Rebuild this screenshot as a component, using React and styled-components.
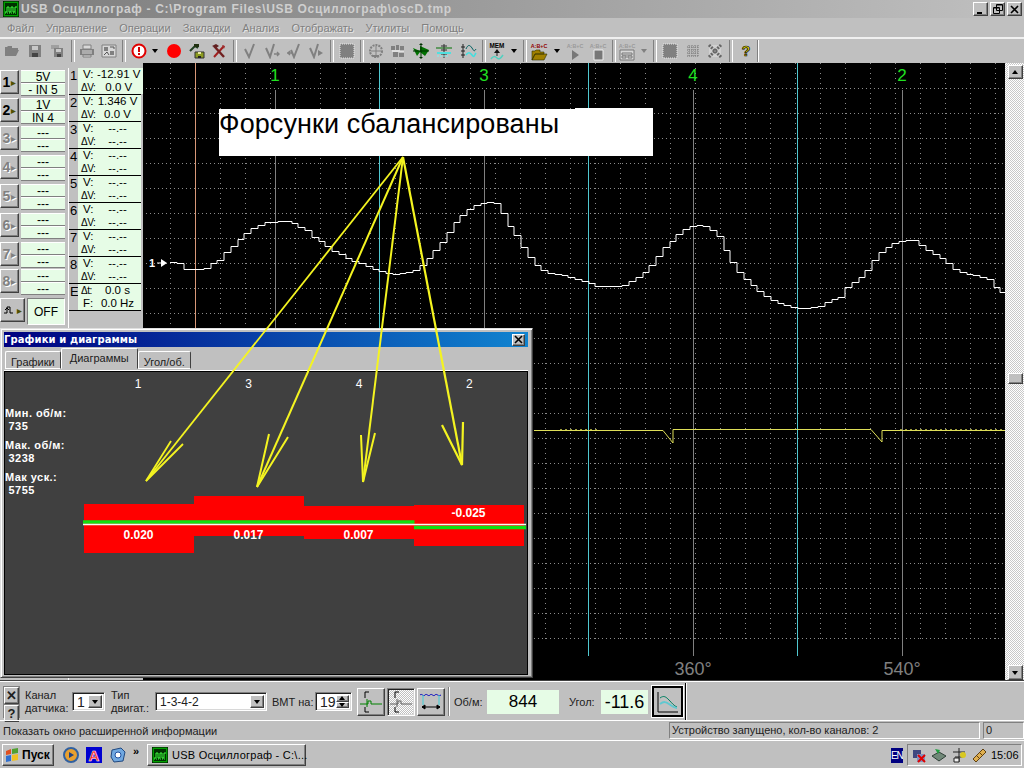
import React from "react";
import styled, { createGlobalStyle, css } from "styled-components";

const Global = createGlobalStyle`
  html, body { margin: 0; padding: 0; background: #c0c0c0; overflow: hidden; }
  body { font-family: "Liberation Sans", Arial, sans-serif; }
  * { box-sizing: border-box; }
  svg { flex: none; }
`;

const raised = css`
  border: 1px solid;
  border-color: #fff #404040 #404040 #fff;
  box-shadow: inset -1px -1px 0 #808080;
  background: #c0c0c0;
`;
const sunken = css`
  border: 1px solid;
  border-color: #808080 #fff #fff #808080;
`;
const deep = css`
  border: 1px solid;
  border-color: #808080 #fff #fff #808080;
  box-shadow: inset 1px 1px 0 #202020, inset -1px -1px 0 #d8d8d8;
`;

const Screen = styled.div`
  position: relative; width: 1024px; height: 768px; overflow: hidden;
  display: flex; flex-direction: column; background: #c0c0c0; color: #000;
`;

/* ---------- title ---------- */
const TitleBar = styled.div`
  height: 18px; flex: none; display: flex; align-items: center; padding: 0 2px 0 3px;
  background: linear-gradient(90deg, #7c7c7c 0%, #c0c0c0 100%);
`;
const TitleText = styled.div`
  margin-left: 2px; flex: 1; font: bold 12px "Liberation Sans", sans-serif; color: #cfcfcf;
  letter-spacing: 0.68px; white-space: nowrap;
`;
const WinBtn = styled.div`
  ${raised}; width: 15px; height: 14px; margin-left: 2px; display: flex;
  align-items: center; justify-content: center;
`;

/* ---------- menu ---------- */
const MenuBar = styled.div`
  height: 21px; flex: none; display: flex; align-items: center; padding-left: 7px; gap: 12px;
  font-size: 11px; color: #808080; text-shadow: 1px 1px 0 #e4e4e4;
  border-bottom: 2px solid #f0f0f0;
`;

/* ---------- toolbar ---------- */
const ToolBar = styled.div`
  height: 24px; flex: none; display: flex; align-items: center;
`;
const Tool = styled.div`
  width: ${(p) => p.$w}px; height: 22px; flex: none; display: flex;
  align-items: center; justify-content: center;
`;
const ToolSep = styled.div`
  width: ${(p) => p.$w}px; height: 22px; flex: none; display: flex; justify-content: center;
  &::before { content: ""; width: 2px; height: 100%; border-left: 1px solid #808080; border-right: 1px solid #fff; }
`;
const Caret = styled.div`
  width: 0; height: 0; border-left: 3.5px solid transparent; border-right: 3.5px solid transparent;
  border-top: 4px solid ${(p) => p.$c || "#000"};
`;

/* ---------- main ---------- */
const Main = styled.div`
  flex: 1; min-height: 0; display: flex;
`;
const LeftPanel = styled.div`
  width: 143px; flex: none; display: flex; padding: 5px 2px 0 0; background: #c0c0c0;
`;
const ChannelCol = styled.div`
  width: 66px; flex: none; display: flex; flex-direction: column; padding-top: 2px;
`;
const ChannelRow = styled.div`
  display: flex; height: ${(p) => p.$h}px; flex: none; gap: 2px;
`;
const ChannelBtn = styled.div`
  ${raised}; width: 19px; height: 24px; display: flex; align-items: center; justify-content: center;
  font: bold 14px "Liberation Sans", sans-serif; color: ${(p) => (p.$off ? "#808080" : "#000")};
  text-shadow: ${(p) => (p.$off ? "1px 1px 0 #fff" : "none")};
  & small { font-size: 6px; margin-left: 1px; color: ${(p) => (p.$off ? "#808080" : "#505000")}; }
`;
const RangeCol = styled.div`
  width: 44px; display: flex; flex-direction: column;
`;
const RangeCell = styled.div`
  height: 13px; background: #e6fce6; border-bottom: 1px solid #808080; border-top: 1px solid #fff;
  font-size: 12px; line-height: 12px; text-align: center; white-space: nowrap; overflow: hidden;
`;
const OffRow = styled.div`
  display: flex; gap: 2px;
`;
const OffBtn = styled(ChannelBtn)`
  width: 25px; height: 24px; font-size: 11px;
`;
const OffBox = styled.div`
  width: 38px; height: 27px; background: #e6fce6; font-size: 12px; display: flex;
  align-items: center; justify-content: center; ${sunken};
`;
const ReadCol = styled.div`
  width: 73px; margin-left: 2px; display: flex; flex-direction: column;
  border-left: 1px solid #fff; 
`;
const ReadRow = styled.div`
  height: 27px; flex: none; display: flex; border-bottom: 1px solid #000;
`;
const ReadNum = styled.div`
  width: 9px; flex: none; background: #c0c0c0; font-size: 13px; line-height: 15px; padding-left: 1px;
`;
const ReadBody = styled.div`
  flex: 1; background: #e6fce6; display: grid; grid-template-columns: 16px 1fr;
  grid-auto-rows: 13px; font-size: 11.5px; line-height: 13px; padding-left: 3px; white-space: nowrap;
`;
const ReadLabel = styled.span`
  font-size: ${(p) => (p.$small ? 10 : 11.5)}px; letter-spacing: ${(p) => (p.$small ? -0.5 : 0)}px;
  padding-left: ${(p) => (p.$small ? 0 : 2)}px;
`;
const ReadVal = styled.div`
  text-align: center; padding-right: 3px;
`;

const Scope = styled.div`
  width: 862px; flex: none; background: #000; border-left: 1px solid #000;
  & > svg { display: block; width: 861px; height: 617px; }
`;
const ScrollBar = styled.div`
  flex: 1; display: flex; flex-direction: column; align-items: center; position: relative; padding: 2px 0 0 1px;
  background: repeating-conic-gradient(#fff 0 25%, #c8c8c8 0 50%) 0 0 / 2px 2px;
`;
const ScrollBtn = styled.div`
  ${raised}; width: 15px; height: 14px; flex: none; display: flex; align-items: center; justify-content: center;
`;
const ScrollThumb = styled(ScrollBtn)`
  margin-top: 294px; height: 11px;
`;
const ScrollDown = styled(ScrollBtn)`
  margin-top: auto; height: 15px;
`;
const UpCaret = styled(Caret)`
  transform: rotate(180deg);
`;

/* ---------- bottom bar ---------- */
const BottomBar = styled.div`
  height: 40px; flex: none; display: flex; align-items: center; padding: 2px 0 0 3px; font-size: 11px;
  color: #202020; border-top: 1px solid #404040; box-shadow: inset 0 1px 0 #fff;
`;
const CloseGroup = styled.div`
  width: 17px; height: 32px; background: #808080; padding: 1px; display: flex; flex-direction: column; gap: 1px;
`;
const SmallBtn = styled.div`
  ${raised}; flex: 1; font: bold 13px "Liberation Sans", sans-serif; display: flex; align-items: center; justify-content: center;
`;
const TwoLine = styled.div`
  width: ${(p) => p.$w}px; margin-left: ${(p) => p.$ml}px; flex: none; line-height: 13px; white-space: nowrap;
`;
const Combo = styled.div`
  ${deep}; width: ${(p) => p.$w}px; margin-left: ${(p) => p.$ml || 0}px; height: 19px; flex: none; background: #fff;
  display: flex; justify-content: space-between; align-items: center; padding: 2px; padding-left: 4px;
  font-size: ${(p) => p.$fs || 12}px;
`;
const ComboBtn = styled.div`
  ${raised}; width: 14px; height: 100%; display: flex; align-items: center; justify-content: center;
`;
const Label = styled.div`
  margin-left: ${(p) => p.$ml}px; width: ${(p) => p.$w}px; flex: none; white-space: nowrap;
`;
const SpinBtns = styled.div`
  width: 16px; height: 100%; display: flex; flex-direction: column;
`;
const SpinBtn = styled(ComboBtn)`
  width: 100%; height: 50%;
`;
const ModeBtn = styled.div`
  ${(p) => (p.$on ? deep : raised)};
  width: 28px; height: 28px; margin-left: ${(p) => p.$ml}px; flex: none; display: flex; align-items: center; justify-content: center;
  ${(p) => p.$on && css`background: repeating-conic-gradient(#fff 0 25%, #c0c0c0 0 50%) 0 0 / 2px 2px;`}
`;
const AngleBtn = styled.div`
  width: 31px; height: 31px; margin-left: 4px; flex: none; border: 2px solid #000; outline: 1px solid #fff; background: #c0c0c0;
  display: flex; align-items: center; justify-content: center;
`;
const VSep = styled.div`
  width: 2px; height: ${(p) => p.$h}px; margin-left: ${(p) => p.$ml}px; flex: none; border-left: 1px solid ${(p) => p.$c || "#808080"}; border-right: 1px solid #fff;
`;
const Display = styled.div`
  width: ${(p) => p.$w}px; height: 24px; margin-left: ${(p) => p.$ml}px; flex: none; background: #e6fce6;
  font-size: ${(p) => p.$fs}px; line-height: 24px; text-align: center; color: #000; white-space: nowrap;
`;

/* ---------- status ---------- */
const StatusBar = styled.div`
  height: 20px; flex: none; display: flex; align-items: center; font-size: 11px; color: #202020;
  border-top: 1px solid #fff; padding-left: 3px;
`;
const StatusHint = styled.div`
  flex: 1; white-space: nowrap;
`;
const StatusCell = styled.div`
  ${sunken}; width: ${(p) => p.$w}px; margin-left: ${(p) => p.$ml}px; height: 17px; flex: none; padding-left: 2px; line-height: 15px; white-space: nowrap;
`;

/* ---------- taskbar ---------- */
const TaskBar = styled.div`
  height: 28px; flex: none; display: flex; align-items: center; padding: 1px 2px 0 2px;
  border-top: 1px solid #fff; font-size: 11px;
`;
const StartBtn = styled.div`
  ${raised}; width: 52px; height: 22px; display: flex; align-items: center; gap: 3px; padding-left: 2px;
  font: bold 12px "Liberation Sans", sans-serif; flex: none;
`;
const Quick = styled.div`
  width: 17px; height: 18px; margin-left: ${(p) => p.$ml}px; flex: none; display: flex; align-items: center; justify-content: center;
`;
const Chevron = styled.div`
  margin-left: ${(p) => p.$ml}px; width: 12px; flex: none; font: bold 11px "Liberation Sans", sans-serif; align-self: flex-start; margin-top: 3px;
`;
const TaskBtn = styled.div`
  ${raised}; width: 159px; height: 22px; margin-left: 2px; flex: none; display: flex; align-items: center; gap: 4px; padding-left: 4px; white-space: nowrap; letter-spacing: 0.25px;
`;
const Lang = styled.div`
  margin-left: auto; width: 12px; height: 15px; background: #000080; color: #fff; font-size: 10px; letter-spacing: -1.2px; line-height: 15px; overflow: hidden; flex: none; white-space: nowrap;
`;
const Tray = styled.div`
  ${sunken}; width: 115px; height: 22px; margin-left: 4px; flex: none; display: flex; align-items: center; gap: 4px; padding: 0 6px 0 3px;
`;
const Clock = styled.div`
  margin-left: auto; font-size: 11px;
`;

/* ---------- dialog ---------- */
const Dialog = styled.div`
  position: absolute; left: 0; top: 328px; width: 533px; height: 350px; background: #c0c0c0;
  border: 1px solid; border-color: #dfdfdf #404040 #404040 #dfdfdf; box-shadow: inset 1px 1px 0 #fff, inset -1px -1px 0 #808080;
  padding: 3px 4px 2px 3px; display: flex; flex-direction: column;
`;
const DlgTitle = styled.div`
  height: 15px; flex: none; display: flex; align-items: center; justify-content: space-between; padding: 0 1px 0 0;
  background: linear-gradient(90deg, #000080, #1084d0); color: #fff; font: bold 10px "DejaVu Sans", sans-serif; letter-spacing: 0.1px;
`;
const DlgClose = styled(WinBtn)`
  width: 13px; height: 12px; margin: 0 2px 0 0;
`;
const Tabs = styled.div`
  height: 24px; flex: none; display: flex; align-items: flex-end; padding: 0 0 1px 1px; border-bottom: 1px solid #fff;
`;
const Tab = styled.div`
  height: ${(p) => (p.$active ? 21 : 18)}px; padding: ${(p) => (p.$active ? "2px 8px 0" : "3px 5px 0")}; flex: none;
  border: 1px solid; border-color: #fff #404040 ${(p) => (p.$active ? "#c0c0c0" : "#fff")} #fff; border-radius: 2px 2px 0 0;
  font-size: 11px; line-height: 14px; white-space: nowrap; background: #c0c0c0; color: #202020;
`;
const DlgBody = styled.div`
  flex: 1; min-height: 0; background: #404040; color: #fff; border: 1px solid #000; display: flex; flex-direction: column;
`;
const HeadRow = styled.div`
  height: 27px; flex: none; display: grid; grid-template-columns: repeat(4, 110.4px); padding: 6px 0 0 78px;
  font-size: 12px; line-height: 13px; text-align: center;
`;
const ChartRow = styled.div`
  display: flex;
`;
const Stats = styled.div`
  width: 78px; flex: none; padding: 8px 0 0 0; font-size: 11px; font-weight: bold; line-height: 12.5px; display: flex; flex-direction: column; gap: 7px;
`;
const StatBlock = styled.div`
  white-space: pre; letter-spacing: 0.45px;
`;
const ChartSvg = styled.svg`
  display: block; width: 445px; height: 72px; margin-top: 91px; flex: none; overflow: visible;
`;

const Annotation = styled.div`
  position: absolute; left: 219px; top: 109px; width: 434px; height: 47px; background: #fff; color: #000;
  font-size: 27px; line-height: 30px; white-space: nowrap; letter-spacing: 0.1px;
  &::before { content: ""; position: absolute; left: 356px; top: -1px; width: 78px; height: 1px; background: #fff; }
`;
const ArrowLayer = styled.svg`
  position: absolute; left: 0; top: 0; width: 1024px; height: 768px; pointer-events: none;
`;

/* ---------- icons ---------- */
const S = ({ children, w = 16, h = 16, vb }) => (
  <svg width={w} height={h} viewBox={vb || `0 0 ${w} ${h}`} fill="none">{children}</svg>
);
const G = "#808080";
const AB = ({ c }) => (
  <text x="9" y="6.5" fontSize="5.4" fontWeight="700" textAnchor="middle" fill={c} fontFamily="Liberation Sans">A:B+C</text>
);
const Icons = {
  open: <S><path d="M1 13V4h2l1-1h4v2h6v2H4l-3 6zM4 7h11l-3 6H1z" fill={G} /></S>,
  save: <S><path d="M2 2h12v12H2z" fill={G} /><path d="M5 3h6v4H5z" fill="#c8c8c8" /><path d="M5 10h6v4H5z" fill="#444" /></S>,
  saveall: <S><path d="M1 2h8v4H1z" fill="#a0a0a0" /><path d="M4 5h9v9H4z" fill={G} /><path d="M6 6h5v3H6z" fill="#c8c8c8" /><path d="M7 11h4v3H7z" fill="#444" /></S>,
  print: <S><path d="M4 2h8v4H4z" fill="#d8d8d8" stroke={G} /><path d="M1 6h14v6H1z" fill={G} /><path d="M3 8h10M3 10h10" stroke="#d8d8d8" /><path d="M4 12h8v2H4z" fill="#d8d8d8" stroke={G} /></S>,
  img: <S><path d="M1 2h14v12H1z" fill="#d8d8d8" stroke={G} /><path d="M3 4h4v4H3zM9 8h4v4H9z" fill={G} /><path d="M3 12l3-3 2 3M9 4h4v2" stroke="#555" /></S>,
  stop: <S><circle cx="8" cy="8" r="6.5" stroke="#e00000" strokeWidth="2" fill="#fff" /><path d="M7 4h2v5H7zM7 10h2v2H7z" fill="#d00000" /></S>,
  rec: <S><circle cx="8" cy="8" r="7" fill="#ff0000" /></S>,
  hammer: <S><path d="M6 9h9v6H6z" fill="#8a9a20" stroke="#333" /><path d="M9 9h3v2H9z" fill="#e8e8a0" /><path d="M9 13h3v2H9z" fill="#222" /><path d="M1 8L6 3l3 2" stroke="#204020" strokeWidth="2" /><path d="M5 1h5v3H5z" fill="#203010" /></S>,
  tools: <S><path d="M3 14L13 3" stroke="#a02020" strokeWidth="2" /><path d="M3 3l10 11" stroke="#702020" strokeWidth="2.4" /><path d="M1 3l4-2 3 2-3 2z" fill="#602020" /><path d="M11 2l3 1-1 3z" fill="#a03030" /></S>,
  v1: <S><path d="M2 6l4 8 5-13" stroke={G} strokeWidth="2" /></S>,
  v2: <S><path d="M1 5l4 9 4-13" stroke={G} strokeWidth="2" /><path d="M9 11h5M12 9l2 2-2 2" stroke={G} strokeWidth="1.4" /></S>,
  v3: <S><path d="M4 7l3 7 5-13" stroke={G} strokeWidth="2" /><path d="M0 10h5M3 8l-2 2 2 2" stroke={G} strokeWidth="1.4" /></S>,
  v4: <S><path d="M1 5l4 9 4-13" stroke={G} strokeWidth="2" /><path d="M9 7l5 3-5 3z" fill={G} /></S>,
  square: <S><path d="M1 1h14v14H1z" fill={G} stroke="#e8e8e8" strokeDasharray="1 1" /></S>,
  a: <S><circle cx="8" cy="8" r="6" stroke={G} strokeWidth="2" strokeDasharray="2 1" /><path d="M3 8h10M8 3v10" stroke={G} /><path d="M5 12h6v2H5z" fill={G} /></S>,
  b: <S><path d="M1 3h4v4H1zM6 2h3v5H6zM10 3h4v5h-4zM3 9h5v5H3zM9 10h5v4H9z" fill={G} /><path d="M2 8h12" stroke="#fff" /></S>,
  green: <S w={18} vb="0 0 18 16"><path d="M1 5l7 3V3l9 4-4 6-5-4-3 4z" fill="#007000" /><path d="M9 1v14M1 8h16" stroke="#003000" /><path d="M7 2l2-2 2 2M7 14l2 2 2-2" fill="#003000" /></S>,
  c: <S w={18} vb="0 0 18 16"><path d="M1 5h16" stroke="#007000" /><path d="M9 1v14M6 3h6M6 7h6M6 11h6" stroke="#303030" /><path d="M2 10h14" stroke="#50e0e0" strokeWidth="2" /><path d="M2 13h12" stroke="#80f0f0" strokeDasharray="2 1" /></S>,
  d: <S w={18} vb="0 0 18 16"><path d="M4 1v14M2 4h4M2 8h4M2 12h4" stroke="#202020" /><path d="M7 6c2-5 4-4 6-1s2 4 4 1" stroke="#006060" /><path d="M7 12c2-3 4-3 6 0s2 1 4-2" stroke="#40e0e0" strokeWidth="1.5" /></S>,
  mem: <S w={18} h={20} vb="0 0 18 20"><text x="9" y="6.5" fontSize="6.4" fontWeight="700" textAnchor="middle" fill="#000" fontFamily="Liberation Sans">MEM</text><path d="M9 8l3 4H6z" fill="#101010" /><path d="M9 12v3" stroke="#202020" /><path d="M3 18c2-3 4-3 6-1s4 0 6-3" stroke="#50d0c0" strokeWidth="1.5" /></S>,
  abOpen: <S w={18} h={20} vb="0 0 18 20"><AB c="#900000" /><path d="M2 19V10h3l1-1h4v2h4v2H5l-3 6zM5 13h12l-3 6H2z" fill="#a08000" stroke="#303000" strokeWidth=".6" /></S>,
  abPlay: <S w={18} h={20} vb="0 0 18 20"><AB c="#9a9a9a" /><path d="M6 9l7 5-7 5z" fill="#777" /></S>,
  abStop: <S w={18} h={20} vb="0 0 18 20"><AB c="#9a9a9a" /><path d="M5 9h9v10H5z" fill="#777" stroke="#eee" /></S>,
  abDisk: <S w={18} h={20} vb="0 0 18 20"><AB c="#9a9a9a" /><path d="M2 9h14v10H2z" fill="#d8d8d8" stroke="#777" /><path d="M4 12h10v2H4zM4 15h4v2H4zM10 15h4v2h-4z" stroke="#777" /></S>,
  grid: <S><path d="M2 2h12v12H2z" fill="#bbb" /><path d="M2 4h12M2 7h12M2 10h12M2 13h12M4 2v12M7 2v12M10 2v12M13 2v12" stroke="#777" strokeDasharray="1 1" /></S>,
  crossg: <S><path d="M2 2h12v12H2z" fill="#d0d0d0" /><path d="M2 2l12 12M14 2L2 14" stroke="#666" strokeWidth="3" strokeDasharray="2 1" /></S>,
  help: <S><text x="8" y="13" fontSize="14" fontWeight="700" textAnchor="middle" fill="#f0e000" stroke="#000" strokeWidth=".7" fontFamily="Liberation Sans">?</text></S>,
};

const toolbar = [
  ["open", 23], ["save", 23], ["saveall", 23], [0, 8], ["print", 20], ["img", 23], [0, 8], ["stop", 21], [1, 12], ["rec", 25],
  ["hammer", 21], ["tools", 24], [0, 8], ["v1", 23], ["v2", 22], ["v3", 22], ["v4", 22], [0, 8], ["square", 22], [0, 8],
  ["a", 20], ["b", 24], ["green", 22], ["c", 23], ["d", 26], [0, 6], ["mem", 20], [1, 14], [0, 8], ["abOpen", 20], [1, 15],
  ["abPlay", 22], ["abStop", 24], [0, 8], ["abDisk", 18], [2, 16], [0, 6], ["square", 24], ["grid", 22], ["crossg", 22], [0, 9], ["help", 22], [0, 2],
];

const AppIcon = () => (
  <S><path d="M0 0h16v16H0z" fill="#00a000" stroke="#000" /><path d="M2 2h12v12H2z" fill="#003000" /><path d="M2 11h2V6h2v5h2V6h2v5h2V6h2" stroke="#40ff40" /><path d="M2 12h12" stroke="#40ff40" strokeDasharray="1 1" /></S>
);

/* ---------- channels data ---------- */
const channels = [
  [1, "5V", "- IN 5", 28], [2, "1V", "IN 4", 28], [3, "---", "---", 29], [4, "---", "---", 29],
  [5, "---", "---", 29], [6, "---", "---", 29], [7, "---", "---", 27], [8, "---", "---", 29],
];
const reads = [
  ["1", "-12.91 V", "0.0 V"], ["2", "1.346 V", "0.0 V"], ["3", "--.--", "--.--"], ["4", "--.--", "--.--"],
  ["5", "--.--", "--.--"], ["6", "--.--", "--.--"], ["7", "--.--", "--.--"], ["8", "--.--", "--.--"],
];

/* ---------- waveform ---------- */
const wave = [[170,262],[177,263],[182,269],[202,269],[208,265],[217,260],[223,253],[230,247],[237,240],[245,232],[252,227],[265,222],[277,221],[285,221],[293,223],[300,229],[307,231],[313,238],[322,242],[327,248],[333,251],[342,255],[350,260],[358,262],[370,268],[378,271],[390,274],[403,273],[413,270],[420,265],[427,258],[433,250],[440,242],[447,232],[453,223],[462,213],[468,208],[477,204],[487,202],[497,204],[500,210],[503,218],[510,229],[517,240],[524,252],[532,262],[538,268],[545,272],[565,276],[580,280],[588,283],[595,286],[620,286],[628,282],[643,272],[657,255],[663,247],[672,239],[678,232],[685,228],[693,225],[703,226],[712,231],[719,238],[727,257],[733,267],[740,276],[748,282],[755,290],[762,294],[768,299],[777,303],[790,307],[803,308],[817,306],[825,302],[838,297],[845,287],[860,276],[867,267],[873,258],[880,251],[888,245],[895,241],[913,240],[922,248],[935,255],[943,260],[950,268],[963,273],[977,276],[990,280],[993,286],[998,292],[1005,293]];
const stepPath = (pts, step) => {
  const at = (x) => {
    for (let i = 1; i < pts.length; i++) {
      if (x <= pts[i][0]) {
        const [a, b] = [pts[i - 1], pts[i]];
        return a[1] + ((b[1] - a[1]) * (x - a[0])) / (b[0] - a[0]);
      }
    }
    return pts[pts.length - 1][1];
  };
  let d = `M170 ${Math.round(at(170)) + 0.5}`;
  for (let x = 170 + step; x < 1005; x += step) {
    const X = Math.round(x);
    d += ` H${X} V${Math.round(at(X)) + 0.5}`;
  }
  return d + " H1005";
};
const range = (a, b, s) => { const r = []; for (let v = a; v <= b; v += s) r.push(v); return r; };

const ScopePlot = () => (
  <svg viewBox="144 63 861 617">
    {range(170, 995, 25).map((x) => (
      <path key={x} d={`M${x + 0.5} 63V640`} stroke="#8c8c8c" strokeDasharray="1 4" />
    ))}
    {range(88, 638, 25).map((y) => (
      <path key={y} d={`M146 ${y + 0.5}H1005`} stroke="#8c8c8c" strokeDasharray="1 3" />
    ))}
    <path d="M195.5 63V600" stroke="#d89878" />
    {[275, 484, 693, 902].map((x) => (
      <path key={x} d={`M${x + 0.5} 90V656`} stroke="#808080" />
    ))}
    {[379, 588, 797].map((x) => (
      <path key={x} d={`M${x + 0.5} 63V656`} stroke="#50c8d0" />
    ))}
    {[["1", 275], ["3", 484], ["4", 693], ["2", 902]].map(([t, x]) => (
      <text key={t} x={x} y="81" fill="#20e020" fontSize="17" textAnchor="middle" fontFamily="Liberation Sans">{t}</text>
    ))}
    <text x="693" y="675" fill="#808080" fontSize="18" textAnchor="middle" fontFamily="Liberation Sans">360°</text>
    <text x="902" y="675" fill="#808080" fontSize="18" textAnchor="middle" fontFamily="Liberation Sans">540°</text>
    <text x="149" y="267" fill="#fff" fontSize="11" fontWeight="700" fontFamily="Liberation Sans">1</text>
    <path d="M157 263h6" stroke="#fff" /><path d="M161 259l6 4-6 4z" fill="#fff" />
    <path d={stepPath(wave, 6.75)} stroke="#fff" strokeWidth="1" fill="none" />
    <path d="M534 430.5H663L673 443V429.5H871L882 442V430.5H1005" stroke="#dede58" fill="none" />
    <path d="M560 429.5H600M690 429.5H730M780 429.5H860M900 429.5H1005" stroke="#dede58" strokeOpacity=".7" strokeDasharray="2 3" />
  </svg>
);

const arrows = [
  { tip: [146, 481], a: [171, 441], b: [183, 444], w: 1.8 },
  { tip: [257, 487], a: [269, 434], b: [288, 437], w: 2 },
  { tip: [363, 482], a: [361, 435], b: [375, 433], w: 2 },
  { tip: [462, 465], a: [442, 425], b: [463, 422], w: 2.2 },
];

const PulseIcon = ({ color }) => (
  <S w={24} h={24}>
    <path d="M6 2h4M6 2v6M6 17v5M6 22h4" stroke="#000" />
    <path d="M1 14h8v-3h3v3h11" stroke={color} fill="none" />
    <path d="M8 9v8" stroke={color} />
  </S>
);

export default function App() {
  return (
    <Screen>
      <Global />
      <TitleBar>
        <AppIcon />
        <TitleText>USB Осциллограф - C:\Program Files\USB Осциллограф\oscD.tmp</TitleText>
        <WinBtn><S w={9} h={9}><path d="M1 7h5v2H1z" fill="#000" /></S></WinBtn>
        <WinBtn><S w={10} h={10}><path d="M3.5.5h6v6h-6zM.5 3.5h6v6h-6z" stroke="#000" fill="#c0c0c0" /><path d="M1 4h5M4 1h5" stroke="#000" /></S></WinBtn>
        <WinBtn><S w={9} h={9}><path d="M1 1l7 7M8 1L1 8" stroke="#000" strokeWidth="1.6" /></S></WinBtn>
      </TitleBar>
      <MenuBar>
        {["Файл", "Управление", "Операции", "Закладки", "Анализ", "Отображать", "Утилиты", "Помощь"].map((m) => (
          <span key={m}>{m}</span>
        ))}
      </MenuBar>
      <ToolBar>
        {toolbar.map(([k, w], i) =>
          k === 0 ? <ToolSep key={i} $w={w} /> :
          k === 1 ? <Tool key={i} $w={w}><Caret /></Tool> :
          k === 2 ? <Tool key={i} $w={w}><Caret $c="#808080" /></Tool> :
          <Tool key={i} $w={w}>{Icons[k]}</Tool>
        )}
      </ToolBar>
      <Main>
        <LeftPanel>
          <ChannelCol>
            {channels.map(([n, a, b, h]) => (
              <ChannelRow key={n} $h={h}>
                <ChannelBtn $off={n > 2}>{n}<small>▶</small></ChannelBtn>
                <RangeCol>
                  <RangeCell>{a}</RangeCell>
                  <RangeCell>{b}</RangeCell>
                </RangeCol>
              </ChannelRow>
            ))}
            <OffRow>
              <OffBtn><S w={12} h={10}><path d="M0 8h3V2h3v6h3" stroke="#000" /><path d="M1 5l2-2 2 2" stroke="#000" /></S><small>▶</small></OffBtn>
              <OffBox>OFF</OffBox>
            </OffRow>
          </ChannelCol>
          <ReadCol>
            {reads.map(([n, a, b]) => (
              <ReadRow key={n}>
                <ReadNum>{n}</ReadNum>
                <ReadBody>
                  <ReadLabel>V:</ReadLabel><ReadVal>{a}</ReadVal>
                  <ReadLabel $small>ΔV:</ReadLabel><ReadVal>{b}</ReadVal>
                </ReadBody>
              </ReadRow>
            ))}
            <ReadRow>
              <ReadNum>E</ReadNum>
              <ReadBody>
                <ReadLabel $small>Δt:</ReadLabel><ReadVal>0.0 s</ReadVal>
                <ReadLabel>F:</ReadLabel><ReadVal>0.0 Hz</ReadVal>
              </ReadBody>
            </ReadRow>
          </ReadCol>
        </LeftPanel>
        <Scope><ScopePlot /></Scope>
        <ScrollBar>
          <ScrollBtn><UpCaret /></ScrollBtn>
          <ScrollThumb />
          <ScrollDown><Caret /></ScrollDown>
        </ScrollBar>
      </Main>
      <BottomBar>
        <CloseGroup>
          <SmallBtn>✕</SmallBtn>
          <SmallBtn>?</SmallBtn>
        </CloseGroup>
        <TwoLine $w={46} $ml={5}>Канал<br />датчика:</TwoLine>
        <Combo $w={33} $ml={1} $fs={14}>1<ComboBtn><Caret /></ComboBtn></Combo>
        <TwoLine $w={42} $ml={6}>Тип<br />двигат.:</TwoLine>
        <Combo $w={112} $ml={2}>1-3-4-2<ComboBtn><Caret /></ComboBtn></Combo>
        <Label $ml={5} $w={41}>ВМТ на:</Label>
        <Combo $w={37} $ml={2} $fs={14}>19<SpinBtns><SpinBtn><UpCaret /></SpinBtn><SpinBtn><Caret /></SpinBtn></SpinBtns></Combo>
        <ModeBtn $ml={5}><PulseIcon color="#008000" /></ModeBtn>
        <ModeBtn $ml={2} $on><PulseIcon color="#606060" /></ModeBtn>
        <ModeBtn $ml={2}>
          <S w={24} h={24}>
            <path d="M1 5c2-2 3 2 5 0s3 2 5 0 3 2 5 0 3 2 6 0" stroke="#0000c0" />
            <path d="M4 5v10M20 5v10" stroke="#40d0d8" />
            <path d="M3 17h18M3 17l3-2v4zM21 17l-3-2v4z" stroke="#000" fill="#000" />
          </S>
        </ModeBtn>
        <VSep $h={29} $ml={3} />
        <Label $ml={4} $w={30}>Об/м:</Label>
        <Display $w={72} $ml={3} $fs={17}>844</Display>
        <Label $ml={10} $w={28}>Угол:</Label>
        <Display $w={47} $ml={4} $fs={18}>-11.6</Display>
        <AngleBtn>
          <S w={24} h={24}>
            <path d="M2 2v20h20" stroke="#000" />
            <path d="M4 8c4-3 6-1 9 2s5 6 8 7" stroke="#008060" />
            <path d="M4 14c4-3 6-2 9 0s5 4 8 4" stroke="#60c8d0" strokeWidth="2" />
          </S>
        </AngleBtn>
        <VSep $h={38} $ml={2} $c="#000" />
      </BottomBar>
      <StatusBar>
        <StatusHint>Показать окно расширенной информации</StatusHint>
        <StatusCell $w={311}>Устройство запущено, кол-во каналов: 2</StatusCell>
        <StatusCell $w={41} $ml={3}>0</StatusCell>
      </StatusBar>
      <TaskBar>
        <StartBtn>
          <S w={14} h={14}>
            <path d="M1 3l5-2v5L1 7z" fill="#e05020" /><path d="M7 1l6-1v5L7 6z" fill="#50a030" />
            <path d="M1 8l5-1v6l-5 1z" fill="#3070d0" /><path d="M7 7l6-1v6l-6 1z" fill="#f0c020" />
          </S>
          Пуск
        </StartBtn>
        <Quick $ml={8}>
          <S><circle cx="8" cy="8" r="7" fill="#e8a030" stroke="#3060a0" strokeWidth="2" /><path d="M6 5l5 3-5 3z" fill="#204080" /></S>
        </Quick>
        <Quick $ml={6}>
          <S>
            <path d="M0 0h16v16H0z" fill="#0000d0" />
            <text x="8" y="14" fontSize="15" fontWeight="700" textAnchor="middle" fill="#ff2020" stroke="#fff" strokeWidth=".5" fontFamily="Liberation Sans">A</text>
          </S>
        </Quick>
        <Quick $ml={7}>
          <S><path d="M2 3l9-2 4 4-2 9-9 1-3-5z" fill="#70a8e0" stroke="#204880" /><circle cx="8" cy="8" r="3" fill="#fff" stroke="#2050a0" /></S>
        </Quick>
        <Chevron $ml={7}>»</Chevron>
        <TaskBtn><AppIcon />USB Осциллограф - C:\...</TaskBtn>
        <Lang>EN</Lang>
        <Tray>
          <S><path d="M2 3h8v8H2z" fill="#404880" /><path d="M6 7h8v8H6z" fill="#8090c0" /><path d="M7 8l7 7M14 8l-7 7" stroke="#e00000" strokeWidth="2" /></S>
          <S><path d="M1 9l7-4 7 4-7 5z" fill="#708878" stroke="#304038" /><path d="M4 2l5 1-2 4z" fill="#20a040" /></S>
          <S><path d="M8 1v14M2 5h12M4 10h8" stroke="#202020" /><circle cx="12" cy="8" r="3" fill="#d8c820" /><path d="M3 11h5v4H3z" fill="#f0f0f0" stroke="#202020" /></S>
          <S><path d="M2 12L12 2l3 3L5 15z" fill="#e0b050" stroke="#604010" /><path d="M5 8l4 4M8 5l4 4" stroke="#604010" /></S>
          <Clock>15:06</Clock>
        </Tray>
      </TaskBar>

      <Dialog>
        <DlgTitle>
          Графики и диаграммы
          <DlgClose><S w={9} h={9}><path d="M1 1l7 7M8 1L1 8" stroke="#000" strokeWidth="1.6" /></S></DlgClose>
        </DlgTitle>
        <Tabs>
          <Tab>Графики</Tab>
          <Tab $active>Диаграммы</Tab>
          <Tab>Угол/об.</Tab>
        </Tabs>
        <DlgBody>
          <HeadRow><span>1</span><span>3</span><span>4</span><span>2</span></HeadRow>
          <ChartRow>
            <Stats>
              <StatBlock>{"Мин. об/м:\n 735"}</StatBlock>
              <StatBlock>{"Мак. об/м:\n 3238"}</StatBlock>
              <StatBlock>{"Мак уск.:\n 5755"}</StatBlock>
            </Stats>
            <ChartSvg viewBox="83 490 445 72">
              <path d="M84 504h110v49H84zM194 496h110v40H194zM304 506h110v33H304zM414 505h110v41H414z" fill="#ff0000" />
              <path d="M83 522H414.5M414 527.5H526" stroke="#10e010" strokeWidth="3.4" />
              <path d="M83 524.5H526" stroke="#f4fff4" strokeWidth="1.3" />
              {[["0.020", 138.5, 539], ["0.017", 248.5, 539], ["0.007", 358.5, 539], ["-0.025", 468.5, 517]].map(([t, x, y]) => (
                <text key={t} x={x} y={y} fill="#fff" fontSize="12" fontWeight="700" textAnchor="middle" fontFamily="Liberation Sans">{t}</text>
              ))}
            </ChartSvg>
          </ChartRow>
        </DlgBody>
      </Dialog>

      <ArrowLayer viewBox="0 0 1024 768">
        {arrows.map(({ tip, a, b, w }, i) => (
          <g key={i} stroke="#f4f420" strokeWidth={w} fill="none">
            <path d={`M403 157L${tip[0]} ${tip[1]}`} />
            <path d={`M${a[0]} ${a[1]}L${tip[0]} ${tip[1]}L${b[0]} ${b[1]}`} />
          </g>
        ))}
      </ArrowLayer>
      <Annotation>Форсунки сбалансированы</Annotation>
    </Screen>
  );
}
